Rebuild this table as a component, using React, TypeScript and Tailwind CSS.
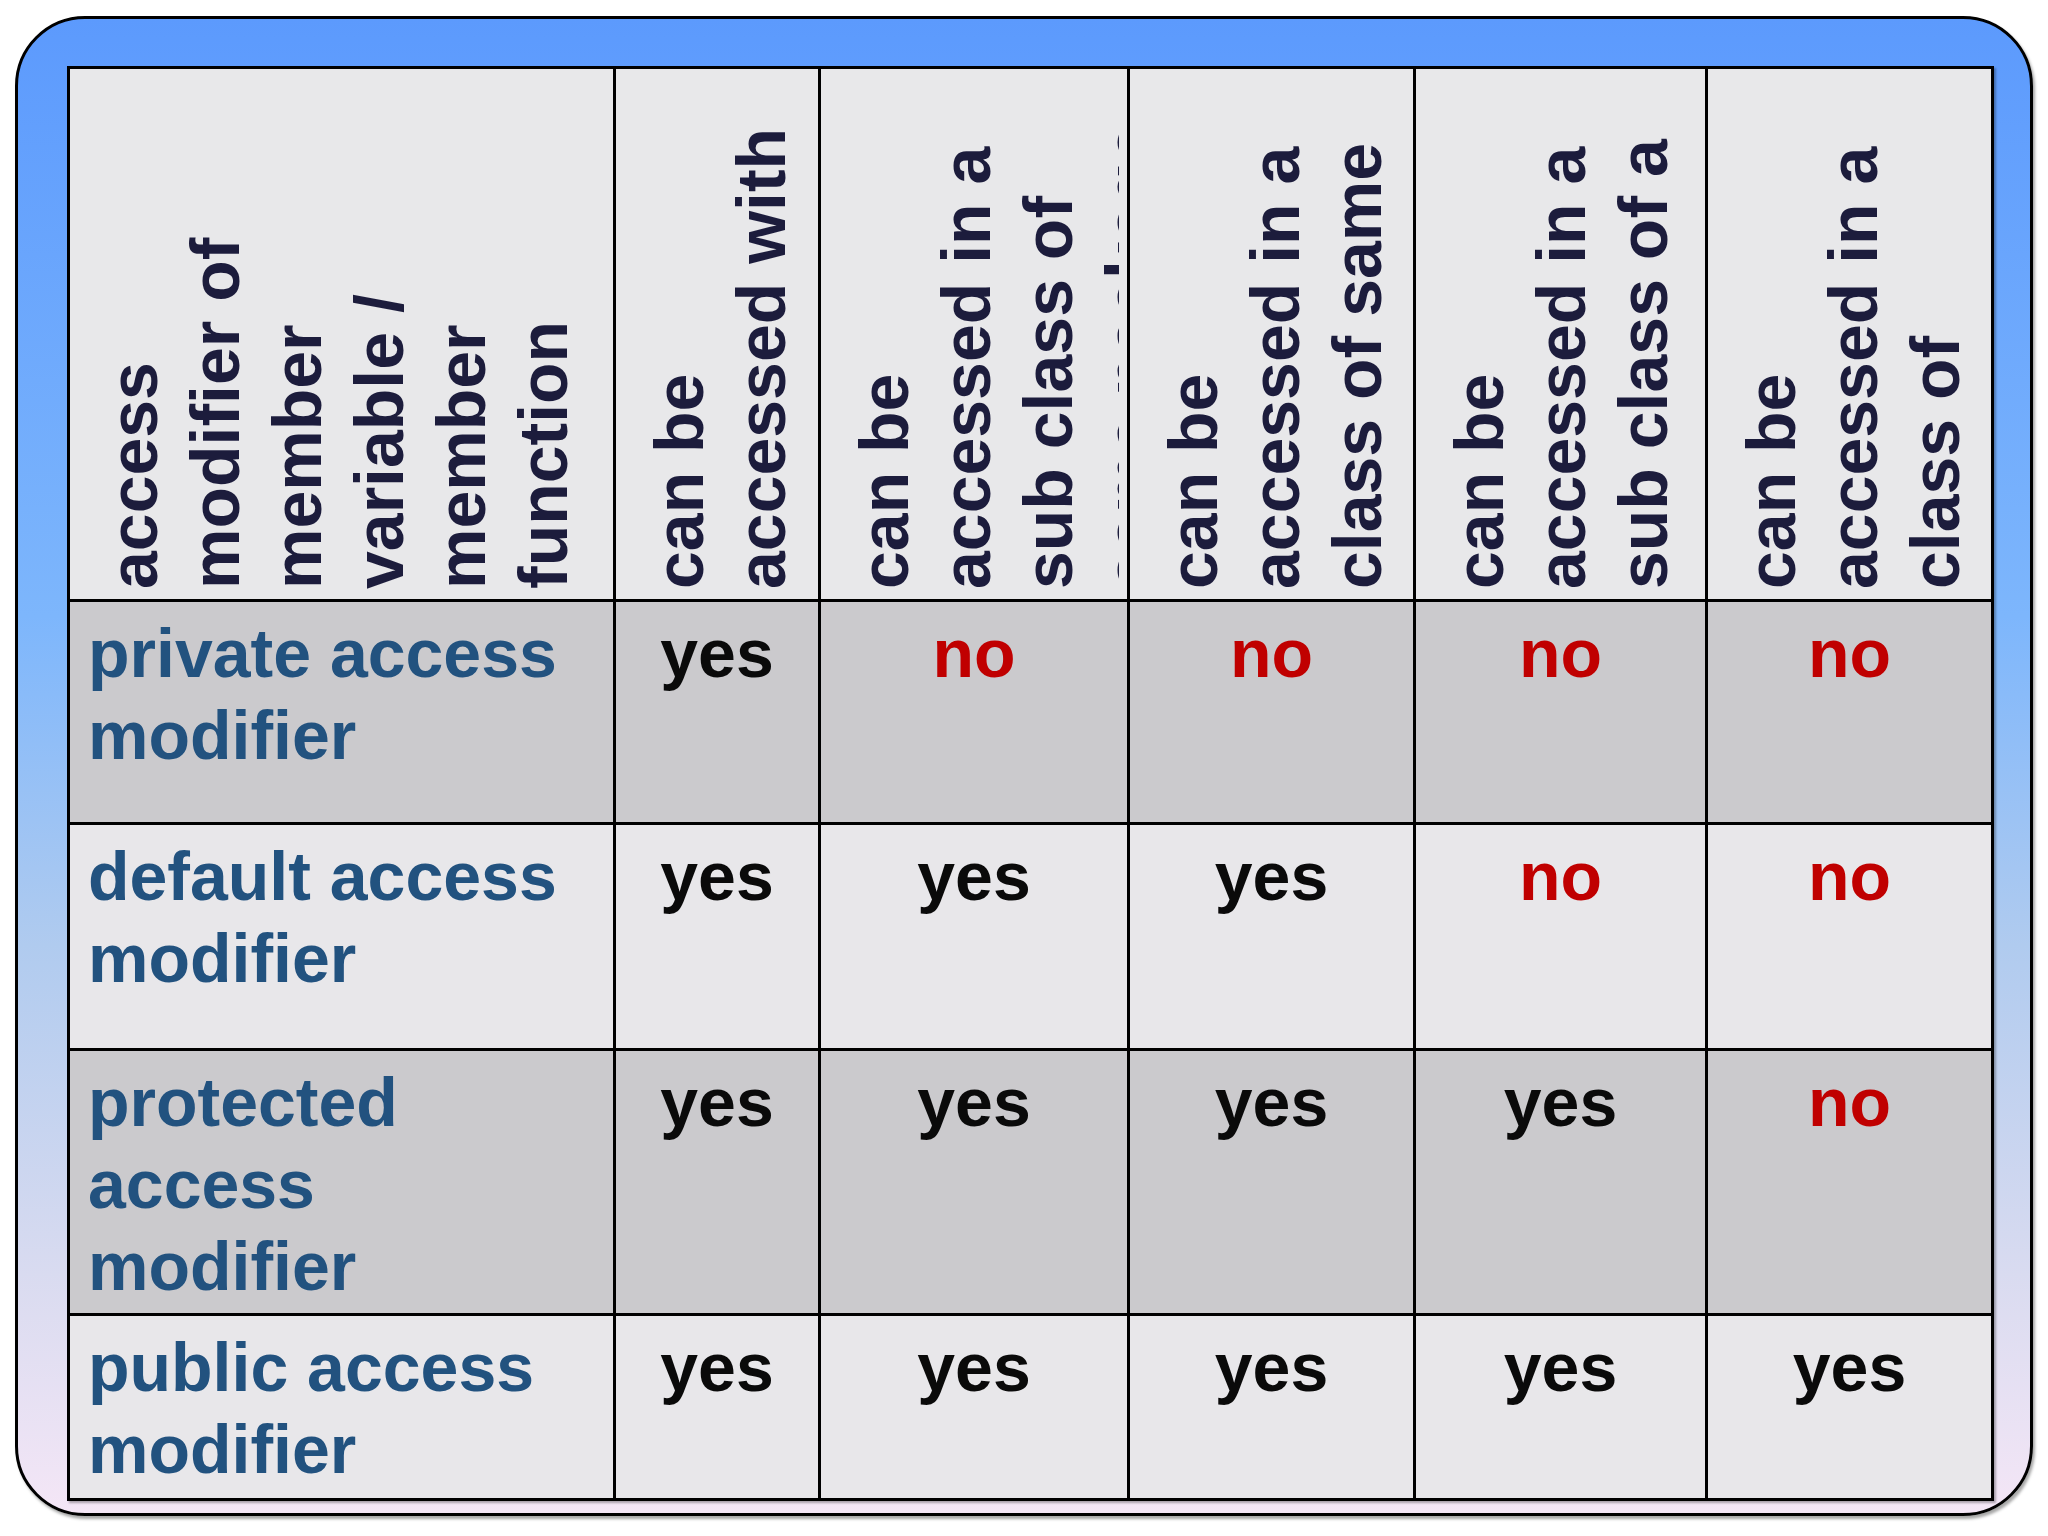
import React from "react";

type Val = "yes" | "no";

const headers: { lines: string[]; clip?: boolean }[] = [
  { lines: ["access", "modifier of", "member", "variable /", "member", "function"] },
  { lines: ["can be", "accessed with"] },
  { lines: ["can be", "accessed in a", "sub class of", "same package"], clip: true },
  { lines: ["can be", "accessed in a", "class of same"] },
  { lines: ["can be", "accessed in a", "sub class of a"] },
  { lines: ["can be", "accessed in a", "class of"] },
];

const rows: { label: string[]; vals: Val[]; dark: boolean }[] = [
  { label: ["private access", "modifier"], vals: ["yes", "no", "no", "no", "no"], dark: true },
  { label: ["default access", "modifier"], vals: ["yes", "yes", "yes", "no", "no"], dark: false },
  { label: ["protected", "access", "modifier"], vals: ["yes", "yes", "yes", "yes", "no"], dark: true },
  { label: ["public access", "modifier"], vals: ["yes", "yes", "yes", "yes", "yes"], dark: false },
];

function HeaderCell({ lines, clip }: { lines: string[]; clip?: boolean }) {
  return (
    <div className={`bg-[#e8e8ea] pl-[22px] pt-[8px] pb-[10px] overflow-hidden ${clip ? "pr-[8px]" : ""}`}>
      <div className="h-full w-full overflow-hidden">
        <div className="h-full w-fit [writing-mode:vertical-rl] rotate-180 text-[#1c1c3c]">
          {lines.map((l, i) => (
            <div key={i} className="whitespace-nowrap">
              {l}
            </div>
          ))}
        </div>
      </div>
    </div>
  );
}

export default function App() {
  return (
    <div className="w-[2048px] h-[1536px] bg-white pl-[15px] pt-[16px] font-['Liberation_Sans',Arial,sans-serif] font-bold text-[68px] leading-[82px]">
      <div className="w-[2018px] h-[1500px] rounded-[70px] border-[3px] border-black shadow-[2px_3px_3px_rgba(0,0,0,0.35)] bg-[linear-gradient(to_bottom,#5c9afd_0%,#7db6fc_40%,#b0cbef_62%,#d9dbf0_84%,#f4e6f6_100%)] pl-[49px] pt-[47px]">
        <div className="grid w-fit grid-cols-[543px_202px_306px_283px_289px_283px] grid-rows-[530px_220px_223px_262px_182px] gap-[3px] border-[3px] border-black bg-black shadow-[2px_2px_2px_rgba(0,0,0,0.3)]">
          {headers.map((h, i) => (
            <HeaderCell key={i} lines={h.lines} clip={h.clip} />
          ))}
          {rows.map((r, ri) => (
            <React.Fragment key={ri}>
              <div className={`${r.dark ? "bg-[#cbcacd]" : "bg-[#e8e7ea]"} pl-[18px] pt-[10px] text-[#22527f]`}>
                {r.label.map((l, i) => (
                  <div key={i} className="whitespace-nowrap">
                    {l}
                  </div>
                ))}
              </div>
              {r.vals.map((v, vi) => (
                <div
                  key={vi}
                  className={`${r.dark ? "bg-[#cbcacd]" : "bg-[#e8e7ea]"} pt-[10px] text-center ${v === "yes" ? "text-[#0a0a0a]" : "text-[#c00000]"}`}
                >
                  {v}
                </div>
              ))}
            </React.Fragment>
          ))}
        </div>
      </div>
    </div>
  );
}
